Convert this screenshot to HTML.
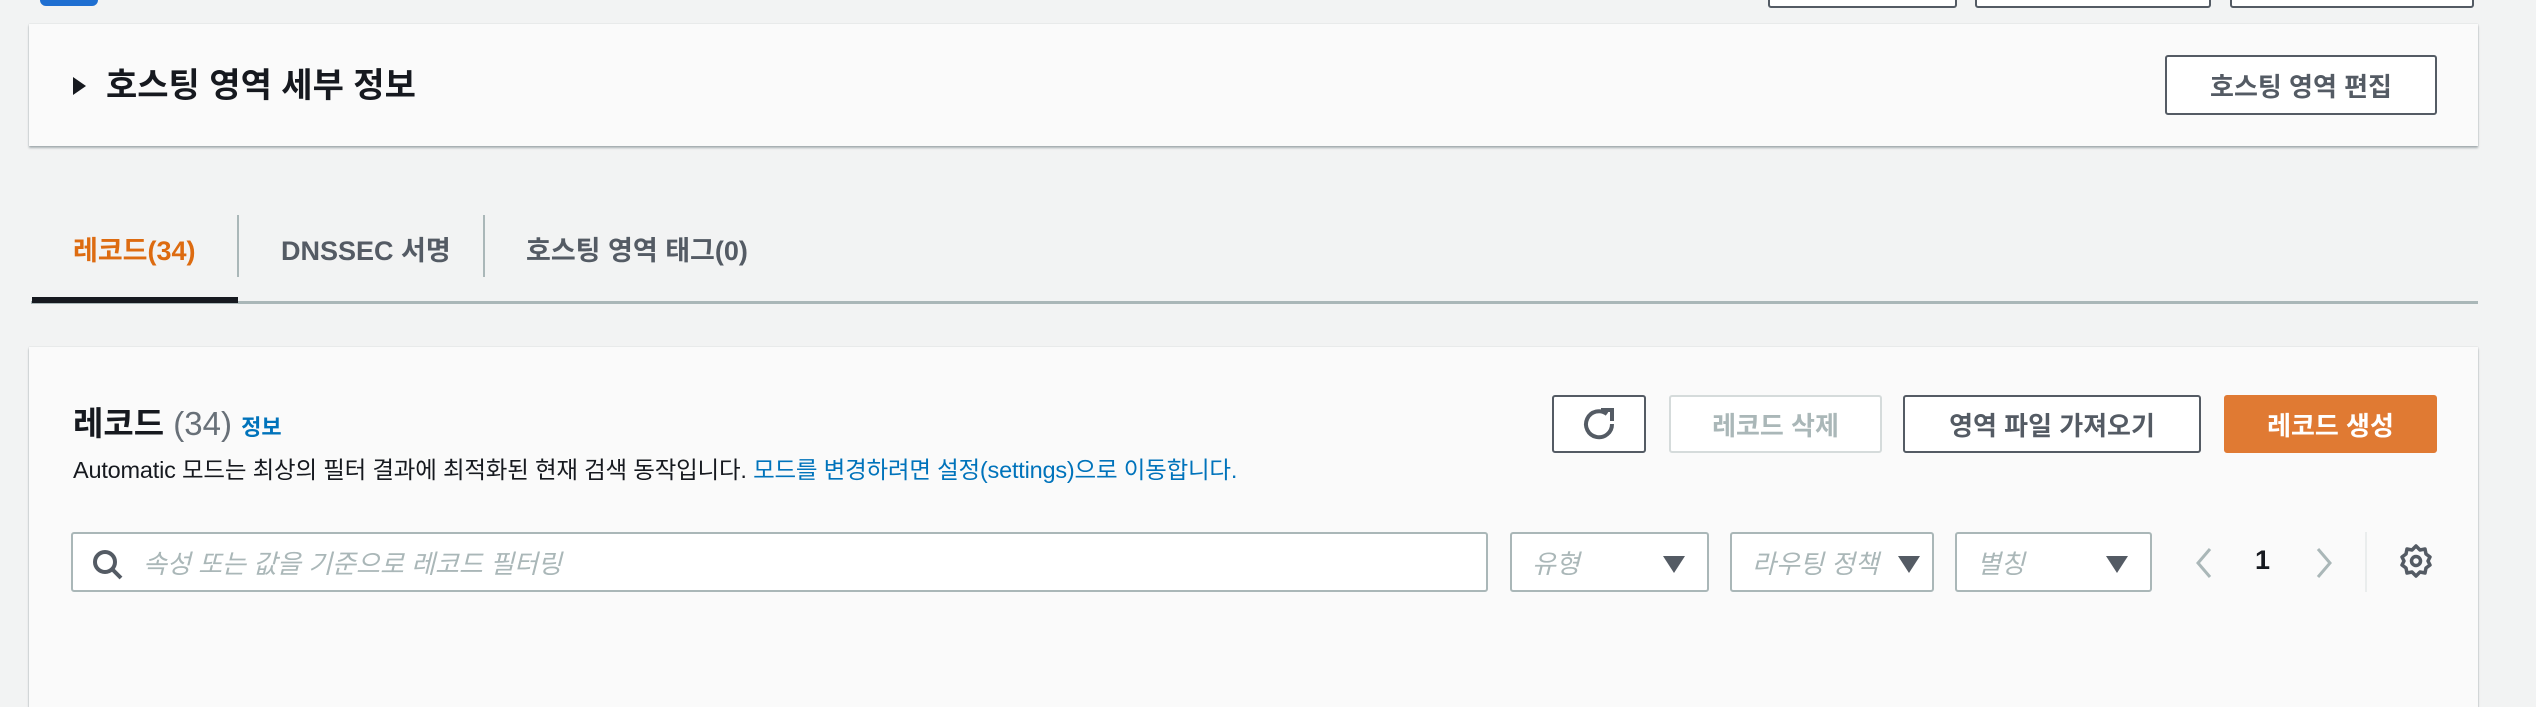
<!DOCTYPE html>
<html><head><meta charset="utf-8"><style>
*{box-sizing:border-box;margin:0;padding:0}
body{width:2536px;height:678px;background:#f2f3f3;position:relative;overflow:hidden;font-family:"Liberation Sans","Noto Sans CJK KR",sans-serif;color:#16191f}
.a{position:absolute}
.card{background:#fafafa;box-shadow:0 2px 2px rgba(0,28,36,.3),0 0 1px rgba(0,28,36,.2)}
.btn{position:absolute;border:2px solid #545b64;border-radius:3px;background:#fff;font-weight:700;font-size:26px;color:#545b64;display:flex;align-items:center;justify-content:center}
.sel{position:absolute;top:532px;height:60px;border:2px solid #aab7b8;border-radius:3px;background:#fff;font-size:26px;font-style:italic;color:#aab7b8;padding-left:20px;display:flex;align-items:center}
.sel .tri{position:absolute;right:22px;top:22px;width:0;height:0;border-left:11px solid transparent;border-right:11px solid transparent;border-top:17px solid #545b64}
.tab{position:absolute;top:229px;font-size:27px;font-weight:700;color:#545b64}
</style></head><body>
<div class="a" style="left:40px;top:-10px;width:58px;height:16px;background:#1f6fd1;border-radius:6px"></div>
<div class="a" style="left:1768px;top:-20px;width:189px;height:28px;border:2px solid #545b64;border-radius:3px;background:#fff"></div>
<div class="a" style="left:1975px;top:-20px;width:236px;height:28px;border:2px solid #545b64;border-radius:3px;background:#fff"></div>
<div class="a" style="left:2230px;top:-20px;width:244px;height:28px;border:2px solid #545b64;border-radius:3px;background:#fff"></div>

<div class="a card" style="left:29px;top:24px;width:2449px;height:122px"></div>
<div class="a" style="left:73px;top:77px;width:0;height:0;border-top:9px solid transparent;border-bottom:9px solid transparent;border-left:13px solid #16191f"></div>
<div class="a" style="left:106px;top:63px;font-size:34px;font-weight:700;line-height:46px">호스팅 영역 세부 정보</div>
<div class="btn" style="left:2165px;top:55px;width:272px;height:60px">호스팅 영역 편집</div>

<div class="tab" style="left:73px;color:#dd6b10">레코드(34)</div>
<div class="a" style="left:237px;top:215px;width:2px;height:62px;background:#aab7b8"></div>
<div class="tab" style="left:281px">DNSSEC 서명</div>
<div class="a" style="left:483px;top:215px;width:2px;height:62px;background:#aab7b8"></div>
<div class="tab" style="left:526px">호스팅 영역 태그(0)</div>
<div class="a" style="left:31px;top:301px;width:2447px;height:3px;background:#aab7b8"></div>
<div class="a" style="left:32px;top:297px;width:206px;height:6px;background:#16191f"></div>

<div class="a card" style="left:29px;top:347px;width:2449px;height:360px"></div>
<div class="a" style="left:73px;top:402px;font-size:33px;font-weight:700;line-height:44px">레코드 <span style="font-weight:400;color:#687078">(34)</span> <span style="font-size:22px;color:#0073bb">정보</span></div>
<div class="a" style="left:73px;top:455px;font-size:23.5px;line-height:30px;color:#16191f;letter-spacing:-0.2px">Automatic 모드는 최상의 필터 결과에 최적화된 현재 검색 동작입니다. <span style="color:#0073bb">모드를 변경하려면 설정(settings)으로 이동합니다.</span></div>

<div class="btn" style="left:1552px;top:395px;width:94px;height:58px"><svg width="38" height="38" viewBox="0 0 38 38"><path d="M27 9A13 13 0 1 0 32 19" fill="none" stroke="#545b64" stroke-width="4"/><path d="M21 5h11v11" fill="none" stroke="#545b64" stroke-width="4"/></svg></div>
<div class="btn" style="left:1669px;top:395px;width:213px;height:58px;border-color:#d5dbdb;color:#aab7b8">레코드 삭제</div>
<div class="btn" style="left:1903px;top:395px;width:298px;height:58px">영역 파일 가져오기</div>
<div class="btn" style="left:2224px;top:395px;width:213px;height:58px;background:#e07a33;border-color:#e07a33;color:#fff">레코드 생성</div>

<div class="sel" style="left:71px;width:1417px;padding-left:70px">속성 또는 값을 기준으로 레코드 필터링
<svg class="a" style="left:18px;top:14px" width="34" height="34" viewBox="0 0 34 34"><circle cx="14" cy="14" r="10" fill="none" stroke="#545b64" stroke-width="4"/><path d="M21 21l9 9" stroke="#545b64" stroke-width="4"/></svg></div>
<div class="sel" style="left:1510px;width:199px">유형<span class="tri"></span></div>
<div class="sel" style="left:1730px;width:204px">라우팅 정책<span class="tri" style="right:12px"></span></div>
<div class="sel" style="left:1955px;width:197px">별칭<span class="tri"></span></div>

<svg class="a" style="left:2192px;top:545px" width="24" height="36" viewBox="0 0 24 36"><path d="M18 4L6 18l12 14" fill="none" stroke="#aab7b8" stroke-width="3"/></svg>
<div class="a" style="left:2255px;top:545px;font-size:27px;font-weight:700;color:#16191f">1</div>
<svg class="a" style="left:2312px;top:545px" width="24" height="36" viewBox="0 0 24 36"><path d="M6 4l12 14L6 32" fill="none" stroke="#aab7b8" stroke-width="3"/></svg>
<div class="a" style="left:2365px;top:532px;width:2px;height:60px;background:#eaeded"></div>
<svg class="a" style="left:2398px;top:543px" width="36" height="36" viewBox="0 0 36 36"><path d="M18 3l4 4 5-1 1 5 4 3-2 4 2 4-4 3-1 5-5-1-4 4-4-4-5 1-1-5-4-3 2-4-2-4 4-3 1-5 5 1z" fill="none" stroke="#545b64" stroke-width="3.5" stroke-linejoin="round"/><circle cx="18" cy="18" r="4.5" fill="none" stroke="#545b64" stroke-width="3.5"/></svg>
</body></html>
